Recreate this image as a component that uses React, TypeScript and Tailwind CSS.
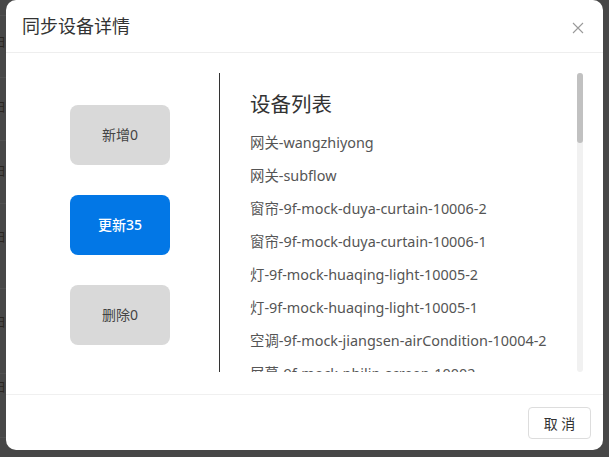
import React from "react";

const items = [
  "网关-wangzhiyong",
  "网关-subflow",
  "窗帘-9f-mock-duya-curtain-10006-2",
  "窗帘-9f-mock-duya-curtain-10006-1",
  "灯-9f-mock-huaqing-light-10005-2",
  "灯-9f-mock-huaqing-light-10005-1",
  "空调-9f-mock-jiangsen-airCondition-10004-2",
  "屏幕-9f-mock-philip-screen-10002",
  "屏幕-9f-mock-philip-screen-10001",
];

const bgGlyphs = [43, 108, 172, 238, 323, 388];
const bgLines = [15, 77, 140, 203, 288, 373, 437];

export default function App() {
  return (
    <div
      className="relative w-[609px] h-[457px] overflow-hidden bg-[#474747]"
      style={{ fontFamily: '"Noto Sans", "Noto Sans CJK SC", sans-serif' }}
    >
      {bgLines.map((y) => (
        <div key={y} className="absolute left-0 w-[6px] h-px bg-[#505050]" style={{ top: y }} />
      ))}
      {bgGlyphs.map((y) => (
        <div
          key={y}
          className="absolute left-[-6px] text-[12px] leading-none text-[#2a2520]"
          style={{ top: y - 6 }}
        >
          日
        </div>
      ))}
      <div className="absolute left-[6px] top-0 w-[597px] h-[450px] bg-white rounded-[10px] flex flex-col">
        <div className="h-[53px] border-b border-[#eeeeee] flex items-center justify-between pl-[16px] pr-[19px] shrink-0">
          <div className="text-[18px] text-[#333333] pt-[1px]">同步设备详情</div>
          <svg width="12" height="12" viewBox="0 0 12 12" className="mt-[3px]">
            <path d="M1 1L11 11M11 1L1 11" stroke="#9a9a9a" strokeWidth="1.1" />
          </svg>
        </div>
        <div className="flex-1 flex px-[20px] pt-[20px] pb-[20px] min-h-0">
          <div className="w-[193px] h-[299px] flex flex-col justify-center gap-[30px] pl-[44px] shrink-0 pt-[4px]">
            <div className="w-[100px] h-[60px] rounded-[8px] bg-[#d9d9d9] flex items-center justify-center text-[14px] text-[#444444]">
              新增0
            </div>
            <div className="w-[100px] h-[60px] rounded-[8px] bg-[#0277e6] flex items-center justify-center text-[14px] text-white font-medium">
              更新35
            </div>
            <div className="w-[100px] h-[60px] rounded-[8px] bg-[#d9d9d9] flex items-center justify-center text-[14px] text-[#444444]">
              删除0
            </div>
          </div>
          <div className="w-px h-[299px] bg-[#333333] shrink-0" />
          <div className="flex-1 h-[299px] flex">
            <div className="flex-1 overflow-hidden pl-[30px]">
              <div className="pt-[17px] h-[45px] leading-[28px] text-[20.5px] text-[#333333] mb-[8px]">设备列表</div>
              {items.map((t) => (
                <div key={t} className="h-[33px] leading-[33px] text-[14.4px] text-[#555555] whitespace-nowrap">
                  {t}
                </div>
              ))}
            </div>
            <div className="w-[6px] h-full bg-[#f1f1f1] rounded-[3px] flex flex-col">
              <div className="h-[70px] w-full bg-[#c1c1c1] rounded-[3px]" />
            </div>
          </div>
        </div>
        <div className="h-[56px] border-t border-[#f0f0f0] flex items-center justify-end pr-[12px] shrink-0">
          <div className="w-[63px] h-[32px] rounded-[4px] border border-[#dddddd] flex items-center justify-center text-[14px] text-[#333333] mt-[1px]">
            取 消
          </div>
        </div>
      </div>
    </div>
  );
}
